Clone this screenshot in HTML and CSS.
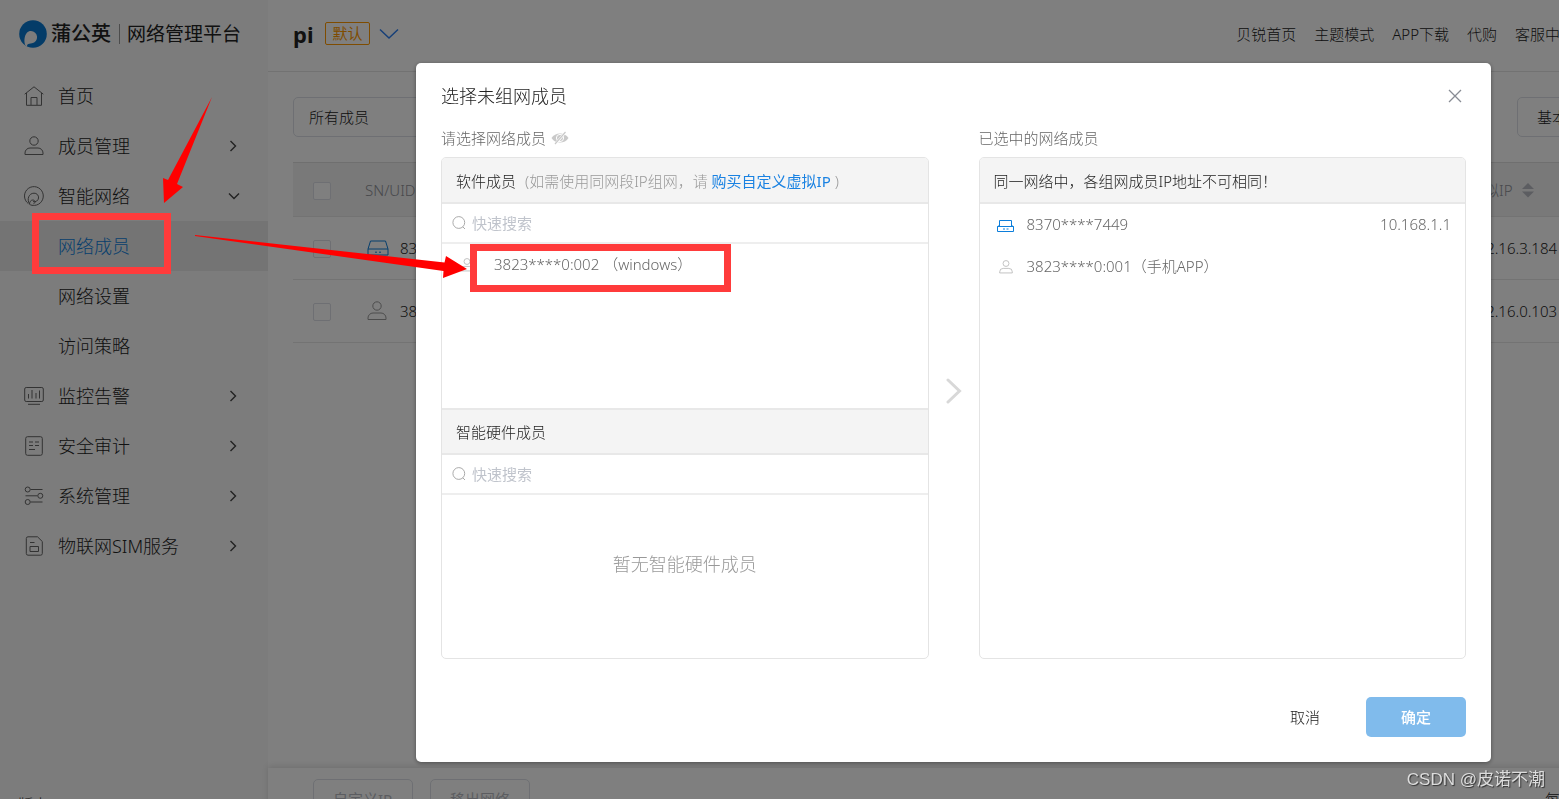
FILE: index.html
```html
<!DOCTYPE html>
<html lang="zh-CN">
<head>
<meta charset="utf-8">
<title>蒲公英网络管理平台</title>
<link rel="stylesheet" href="styles.css">
</head>
<body>
<svg class="sprite" aria-hidden="true">
  <symbol id="user" viewBox="0 0 20 20"><circle cx="10" cy="5" r="4.2"/><path d="M1 18.5v-1.5a5 5 0 0 1 5-5h8a5 5 0 0 1 5 5v1.5z"/></symbol>
  <symbol id="router" viewBox="0 0 22 16"><path d="M3.5 1h15l2.5 8v6H1V9zM1 9h20M8 12.2h2M12 12.2h2"/></symbol>
  <symbol id="right" viewBox="0 0 8 12"><path d="M1.5 1l5 5-5 5"/></symbol>
  <symbol id="down" viewBox="0 0 12 8"><path d="M1 1.5l5 5 5-5"/></symbol>
  <symbol id="search" viewBox="0 0 14 14"><circle cx="6.8" cy="6.5" r="5.9"/><path d="M10.8 10.8l2.2 2.2"/></symbol>
</svg>
<div class="app">
  <aside class="sidebar">
    <div class="brand">
      <svg class="brand-mark" viewBox="0 0 28 28"><circle cx="14" cy="14" r="13.8" fill="#0878d0"/><path d="M6.500 25.500C4.500 22 5 11 12 11a6.200 6.200 0 0 1 1 12.300c-2 .4-3.500.3-4.500 1.200l-.8 2z" fill="#f8f8f8"/></svg>
      <strong class="brand-name">蒲公英</strong><span class="brand-sub">网络管理平台</span>
    </div>
    <nav class="menu">
      <a class="item" href="#"><svg class="icon" viewBox="0 0 20 20"><path d="M.7 8.2L10 .8l9.300 7.400M2.500 7v12.300h15V7M7 19v-7.500h6V19"/></svg><span class="text">首页</span></a>
      <a class="item" href="#"><svg class="icon"><use href="#user"/></svg><span class="text">成员管理</span><svg class="chev"><use href="#right"/></svg></a>
      <a class="item" href="#"><svg class="icon" viewBox="0 0 20 20"><path d="M4.200 17.500A9.400 9.400 0 1 1 10.500 19.400M5.500 18C2.500 13 5 7.200 10 7.200a4.300 4.300 0 1 1-1 8.400"/><path d="M5.500 18.300c0-2 1-4.300 3.300-4.300 2.500 0 3 3 .7 3.800M5.500 18.300c1.500 1 3.500 1.300 5 1.100"/></svg><span class="text">智能网络</span><svg class="chev chev-down"><use href="#down"/></svg></a>
      <a class="item active" href="#"><span class="text">网络成员</span></a>
      <a class="item" href="#"><span class="text">网络设置</span></a>
      <a class="item" href="#"><span class="text">访问策略</span></a>
      <a class="item" href="#"><svg class="icon" viewBox="0 0 20 20"><rect x=".7" y="1.500" width="18.600" height="14" rx="1.500"/><path d="M4.500 8v4.500M8 4v8.500M12 7v5.500M15.500 4.500v8M4 18.300h12"/></svg><span class="text">监控告警</span><svg class="chev"><use href="#right"/></svg></a>
      <a class="item" href="#"><svg class="icon" viewBox="0 0 20 20"><rect x="1.700" y=".7" width="16.600" height="18.600" rx="1.800"/><path d="M5 6h4M11 6h4M5 9.500h4M11 9.500h4M5 13.500h6"/></svg><span class="text">安全审计</span><svg class="chev"><use href="#right"/></svg></a>
      <a class="item" href="#"><svg class="icon" viewBox="0 0 20 20"><circle cx="3.700" cy="3.500" r="2.500"/><circle cx="16.300" cy="9.800" r="2.500"/><circle cx="3.700" cy="16" r="2.500"/><path d="M6.500 3.500H18.500M1.500 9.800h12M6.500 16h12"/></svg><span class="text">系统管理</span><svg class="chev"><use href="#right"/></svg></a>
      <a class="item" href="#"><svg class="icon" viewBox="0 0 20 20"><path d="M4 .8h9.500l4.800 4.700V17.500a1.700 1.700 0 0 1-1.700 1.700H4a1.700 1.700 0 0 1-1.700-1.700v-15A1.700 1.700 0 0 1 4 .8zM6 10.500h8.500v5H6zM6 6.500h4.500"/></svg><span class="text">物联网SIM服务</span><svg class="chev"><use href="#right"/></svg></a>
    </nav>
    <div class="version">版本：v6.3.11</div>
  </aside>
  <main class="main">
    <header class="topbar">
      <h1 class="net-name">pi</h1><span class="tag">默认</span>
      <svg class="net-chev" viewBox="0 0 20 12"><path d="M1 1.500l9 8.500 9-8.500"/></svg>
      <nav class="links"><a href="#">贝锐首页</a><a href="#">主题模式</a><a href="#">APP下载</a><a href="#">代购</a><a href="#">客服中心</a></nav>
    </header>
    <section class="content">
      <div class="filters">
        <select class="picker" aria-label="成员筛选"><option>所有成员</option></select>
        <button class="btn" type="button">基本</button>
      </div>
      <table class="members">
        <thead><tr><th class="c-check"><input type="checkbox" aria-label="全选"></th><th>SN/UID</th><th class="c-ip"><span class="sort">虚拟IP<svg viewBox="0 0 12 16"><path d="M0 7l6-6 6 6zM0 9.500l6 6 6-6z"/></svg></span></th></tr></thead>
        <tbody>
          <tr><td class="c-check"><input type="checkbox" aria-label="选择 8370"></td><td><span class="member"><svg class="m-router"><use href="#router"/></svg>8370****7449</span></td><td class="c-ip">172.16.3.184</td></tr>
          <tr><td class="c-check"><input type="checkbox" aria-label="选择 3823"></td><td><span class="member"><svg class="m-user"><use href="#user"/></svg>3823****0:001</span></td><td class="c-ip">172.16.0.103</td></tr>
        </tbody>
      </table>
    </section>
    <footer class="actions"><button class="btn" type="button">自定义IP</button><button class="btn" type="button">移出网络</button><span class="per">每页</span></footer>
  </main>
</div>

<div class="mask">
  <div class="dialog" role="dialog" aria-labelledby="dlg-title">
    <div class="dlg-head"><h2 id="dlg-title">选择未组网成员</h2><button class="close" type="button" aria-label="关闭"><svg viewBox="0 0 14 14"><path d="M1 1l12 12M13 1L1 13"/></svg></button></div>
    <div class="transfer">
      <section class="side">
        <div class="label">请选择网络成员<svg class="eye" viewBox="0 0 18 14"><path d="M.5 7C4 1 14 1 17.500 7 14 13 4 13 .5 7z" fill="#c9c9c9"/><circle cx="9" cy="7" r="3.600" fill="none" stroke="#fff"/><path d="M4 13.500L15 .5" stroke="#fff" stroke-width="2.500"/><path d="M4 13L14.500 1" stroke="#c9c9c9" stroke-width="1.200"/></svg></div>
        <div class="panel">
          <div class="panel-head">软件成员<span class="hint">(如需使用同网段IP组网，请 <a href="#">购买自定义虚拟IP</a> )</span></div>
          <label class="search"><svg><use href="#search"/></svg><input type="text" placeholder="快速搜索" aria-label="搜索软件成员"></label>
          <ul class="list soft"><li><svg class="s-user"><use href="#user"/></svg><span>3823****0:002 （windows）</span></li></ul>
          <div class="panel-head second">智能硬件成员</div>
          <label class="search"><svg><use href="#search"/></svg><input type="text" placeholder="快速搜索" aria-label="搜索硬件成员"></label>
          <p class="empty">暂无智能硬件成员</p>
        </div>
      </section>
      <svg class="arrow" viewBox="0 0 16 26"><path d="M2 2l11.500 11L2 24"/></svg>
      <section class="side">
        <div class="label">已选中的网络成员</div>
        <div class="panel">
          <div class="panel-head">同一网络中，各组网成员IP地址不可相同！</div>
          <ul class="list chosen">
            <li><svg class="s-router" viewBox="0 0 17 12"><path d="M2.500 6V.5h12V6M.5 6.500h16v5H.5zM.5 6.500l1-1M16.500 6.500l-1-1M6 9h2M9.500 9h2"/></svg><span>8370****7449</span><span class="ip">10.168.1.1</span></li>
            <li><svg class="s-user"><use href="#user"/></svg><span>3823****0:001（手机APP）</span></li>
          </ul>
        </div>
      </section>
    </div>
    <div class="dlg-foot"><button class="cancel" type="button">取消</button><button class="ok" type="button">确定</button></div>
  </div>
</div>

<div class="mark mark-menu"></div>
<div class="mark mark-row"></div>
<svg class="pointers" viewBox="0 0 480 300" aria-hidden="true"><path d="M212 97L177 184 183 187 164 203 163 178 168 180zM195 235L444.500 262.500 446 256 467 269 443 278 443.500 271 195 236z"/></svg>
<div class="watermark">CSDN @皮诺不潮</div>
</body>
</html>
```

FILE: styles.css
```css
* { box-sizing: border-box; }
body { margin: 0; height: 100vh; overflow: hidden; position: relative; font: 300 15px/20px "Noto Sans", "Noto Sans CJK SC", sans-serif; color: #222; }
a { color: inherit; text-decoration: none; }
button, input, select { font: inherit; color: inherit; }
svg { fill: none; stroke: currentColor; flex: none; }
.sprite { position: absolute; width: 0; height: 0; }

.app { display: flex; width: calc(100% + 60px); height: calc(100vh + 32px); background: #fff; }
.sidebar { width: 268px; background: #f8f8f8; display: flex; flex-direction: column; }
.brand { display: flex; align-items: center; height: 71px; padding: 0 0 4px 19px; }
.brand-mark { width: 28px; height: 28px; stroke: none; margin-right: 4px; }
.brand-name { font-size: 20px; font-weight: 500; line-height: 20px; padding-right: 8px; border-right: 1px solid #999; color: #222; }
.brand-sub { font-size: 19px; font-weight: 400; margin-left: 7px; color: #222; }
.item { display: flex; align-items: center; height: 50px; padding: 0 31px 0 24px; font-size: 18px; }
.icon { width: 20px; height: 20px; margin-right: 14px; color: #666; }
.item .text { flex: 1; }
.item > .text:first-child { padding-left: 34px; }
.active { background: #e8e8e8; color: #0c7edb; }
.chev { width: 8px; height: 12px; color: #444; stroke-width: 1.400; }
.chev-down { width: 12px; height: 8px; margin-right: -3px; }
.version { margin-top: auto; padding: 0 18px 17px; }

.main { flex: 1; display: flex; flex-direction: column; min-width: 0; }
.topbar { display: flex; align-items: center; height: 72px; padding: 0 44px 4px 25px; border-bottom: 1px solid #e4e4e4; }
.net-name { margin: 0; font-size: 22px; font-weight: 700; }
.tag { margin-left: 12px; padding: 0 6px; border: 1px solid #ff9900; border-radius: 2px; color: #ff9900; line-height: 21px; font-weight: 400; }
.net-chev { width: 20px; height: 12px; margin-left: 9px; color: #2d7ff0; stroke-width: 1.500; }
.links { display: flex; gap: 18px; margin-left: auto; }
.content { flex: 1; padding: 25px 0 0 25px; }
.filters { display: flex; justify-content: space-between; }
.picker { width: 200px; height: 40px; padding: 0 15px; border: 1px solid #dcdfe6; border-radius: 5px; background: #fff; appearance: none; }
.btn { min-width: 100px; height: 40px; border: 1px solid #dcdfe6; border-radius: 5px; background: #fff; padding: 0 19px; text-align: left; }
.filters .btn { width: 102px; }
.members { width: 100%; margin-top: 25px; border-collapse: collapse; table-layout: fixed; border-top: 1px solid #dedede; }
.members tr { height: 63px; border-bottom: 1px solid #e6e6e6; }
.members thead tr { height: 54px; background: #f2f2f2; color: #909399; }
.members th, .members td { padding: 0; text-align: left; font-weight: 300; }
.members .c-check { width: 72px; padding-left: 20px; }
.members .c-ip { width: 150px; }
.members input { appearance: none; display: block; width: 18px; height: 18px; margin: 2px 0 0; border: 1px solid #dcdfe6; border-radius: 2px; background: #fff; }
.sort { display: flex; align-items: center; gap: 9px; }
.sort svg { width: 12px; height: 16px; fill: #b8bbc2; stroke: none; }
.member { display: flex; align-items: center; gap: 11px; padding-left: 2px; }
.m-router { width: 22px; height: 16px; color: #0c7edb; }
.m-user { width: 20px; height: 20px; margin-right: 2px; color: #999; }
.actions { display: flex; gap: 17px; height: 63px; padding: 11px 44px 0 45px; box-shadow: 0 -2px 6px rgba(0, 0, 0, .12); }
.actions .btn { color: #b8bbc2; font-weight: 400; }
.per { margin-left: auto; line-height: 40px; }

.mask { position: fixed; inset: 0; display: flex; align-items: flex-start; padding: 63px 68px 0 416px; background: rgba(0, 0, 0, .5); }
.dialog { flex: 1; padding: 0 25px 25px; border-radius: 5px; background: #fff; box-shadow: 0 1px 4px rgba(0, 0, 0, .4); }
.dlg-head { display: flex; align-items: center; justify-content: space-between; height: 65px; }
.dlg-head h2 { margin: 0; font-size: 18px; font-weight: 300; }
.close { display: flex; padding: 4px; border: 0; background: none; color: #888c94; stroke-width: 1.300; }
.close svg { width: 14px; height: 14px; }
.transfer { display: flex; }
.side { flex: 1; min-width: 0; color: #666; }
.label { display: flex; align-items: center; gap: 5px; height: 20px; margin-bottom: 9px; }
.eye { width: 18px; height: 14px; stroke: none; }
.panel { height: 502px; border: 1px solid #e4e4e4; border-radius: 5px; overflow: hidden; }
.panel-head { height: 46px; padding: 0 14px; line-height: 46px; background: #f4f4f4; border-bottom: 2px solid #e8e8e8; color: #222; }
.second { border-top: 2px solid #e8e8e8; height: 47px; line-height: 44px; }
.hint { margin-left: 9px; color: #999; }
.hint a { color: #1a82e2; font-weight: 400; }
.search { display: flex; align-items: center; gap: 6px; height: 40px; padding: 0 10px; border-bottom: 2px solid #eee; color: #aaa; }
.search svg { width: 14px; height: 14px; }
.search input { flex: 1; min-width: 0; border: 0; padding: 0; outline: 0; background: none; }
.search input::placeholder { color: #c0c4cc; font-weight: 400; }
.list { margin: 0; padding: 0; list-style: none; }
.list li { display: flex; align-items: center; height: 42px; }
.list span { margin-bottom: 2px; }
.soft { height: 164px; }
.soft li { gap: 20px; padding-left: 18px; }
.chosen li { gap: 13px; padding: 0 14px 0 17px; }
.s-user { width: 14px; height: 14px; color: #aaa; }
.chosen .s-user { margin: 0 1px 0 2px; }
.s-router { width: 17px; height: 12px; margin-top: 2px; color: #0c7edb; }
.ip { margin-left: auto; }
.empty { margin: 59px 0 0; text-align: center; font-size: 18px; color: #999; }
.arrow { width: 16px; height: 26px; margin: 250px 17px 0; color: #d8d8d8; stroke-width: 3; stroke-linecap: round; }
.dlg-foot { display: flex; justify-content: flex-end; gap: 30px; margin-top: 38px; }
.cancel, .ok { height: 40px; border: 0; border-radius: 5px; background: none; }
.cancel { padding: 0 16px; }
.ok { width: 100px; background: #80bbec; color: #fff; font-weight: 500; }

.mark { position: absolute; border: 7px solid #ff3b3b; }
.mark-menu { left: 32px; top: 213px; width: 139px; height: 61px; }
.mark-row { left: 470px; top: 244px; width: 261px; height: 48px; }
.pointers { position: absolute; left: 0; top: 0; width: 480px; height: 300px; fill: #f00; stroke: none; }
.watermark { position: absolute; right: 14px; bottom: 8px; font: 17px/22px "Liberation Sans", "Noto Sans CJK SC", sans-serif; color: #ddd; text-shadow: 1px 1px 1px #333; }
```
